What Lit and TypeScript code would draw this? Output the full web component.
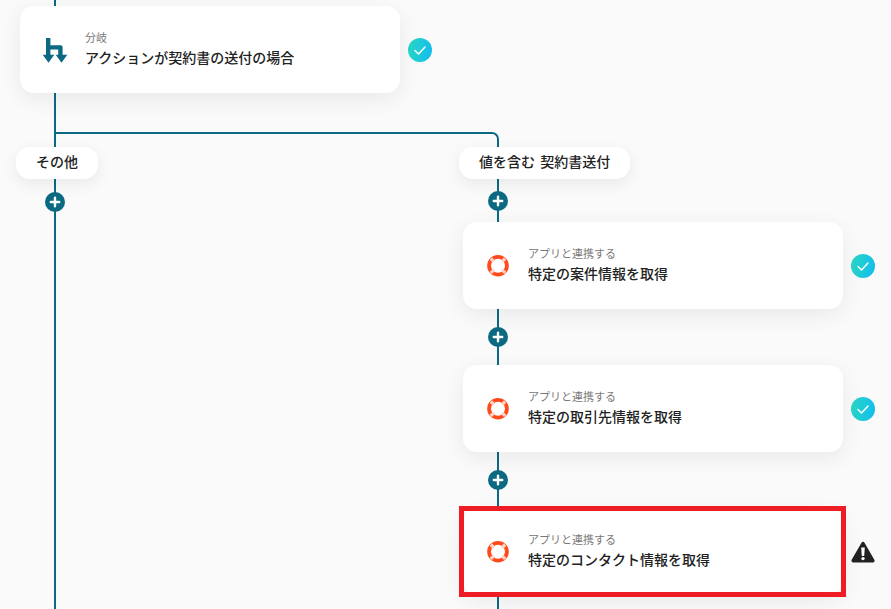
import { LitElement, html, css, svg } from "lit";
import { customElement } from "lit/decorators.js";

const branchIcon = html`<svg class="icon" viewBox="0 0 24 24" width="24" height="24" aria-hidden="true">
  <path d="M3 0h4.400v7.200h10.200a2 2 0 0 1 2 2V18h-4.400v-6.600H7.400V18H3z" fill="#0b6a82"/>
  <path d="M-.3 16.800h11.600L5.500 24.800zM12.700 16.800h11.600L18.500 24.800z" fill="#0b6a82"/>
</svg>`;

const ringIcon = html`<svg class="icon" viewBox="0 0 24 24" width="24" height="24" aria-hidden="true">
  <circle cx="12" cy="11.700" r="8.900" fill="none" stroke="#ff4a1c" stroke-width="3.800"/>
  <g stroke="#ffd2c6" stroke-width="3.200">
    <path d="M4.800 4.500 7.900 7.600M19.200 4.500 16.100 7.600M19.200 18.900 16.100 15.800M4.800 18.900 7.900 15.800"/>
  </g>
</svg>`;

const checkBadge = html`<span class="check"><svg viewBox="0 0 24 24" width="24" height="24" aria-hidden="true">
  <path d="M7 12.500l3.500 3.500 6.500-7" fill="none" stroke="#fff" stroke-width="1.500" stroke-linecap="round" stroke-linejoin="round"/>
</svg></span>`;

const warnBadge = html`<svg class="warn" viewBox="0 0 24 24" width="24" height="24" aria-hidden="true">
  <path d="M12 3.500 21.800 20.700H2.200Z" fill="#222" stroke="#222" stroke-width="3.500" stroke-linejoin="round"/>
  <path d="M10.200 7.500h3.600l-.6 8.500h-2.400z" fill="#fff"/>
  <circle cx="12" cy="18.600" r="1.700" fill="#fff"/>
</svg>`;

const wires = svg`
  <path d="M55 0V609" />
  <path d="M55 133H492a6 6 0 0 1 6 6V609" />
`;

@customElement("app-root")
export class AppRoot extends LitElement {
  static styles = css`
    :host {
      display: block;
      width: 891px;
      height: 609px;
      font-family: "Noto Sans CJK JP", "Noto Sans", sans-serif;
      color: #222;
    }
    .canvas {
      position: relative;
      height: 609px;
      overflow: hidden;
      background: #fafafa;
    }
    .wires {
      position: absolute;
      inset: 0;
      fill: none;
      stroke: #0b6a82;
      stroke-width: 2;
    }
    .content {
      position: relative;
      padding-top: 6px;
    }
    .step {
      display: flex;
      align-items: center;
      gap: 8px;
    }
    .step.top {
      margin-left: 20px;
    }
    .card {
      position: relative;
      box-sizing: border-box;
      width: 380px;
      height: 87px;
      display: flex;
      align-items: center;
      gap: 18px;
      padding-left: 23px;
      background: #fff;
      border-radius: 14px;
      box-shadow: 0 6px 22px rgba(0, 0, 0, 0.07);
    }
    .icon {
      flex: none;
      display: block;
      overflow: visible;
    }
    .texts {
      display: flex;
      flex-direction: column;
      padding-bottom: 4px;
    }
    .sub {
      font-size: 11px;
      line-height: 18px;
      color: #777;
    }
    .title {
      font-size: 14px;
      line-height: 22px;
      font-weight: 500;
      color: #222;
    }
    .check {
      display: block;
      width: 24px;
      height: 24px;
      border-radius: 50%;
      background: linear-gradient(100deg, #2bd8c2, #10bcef);
    }
    .check svg,
    .warn {
      display: block;
      flex: none;
    }
    .branches {
      display: grid;
      grid-template-columns: 459px 1fr;
      margin-top: 54px;
    }
    .other {
      padding-left: 16px;
    }
    .pill {
      display: inline-block;
      height: 32px;
      padding: 0 20px;
      border-radius: 14px;
      background: #fff;
      font-size: 14px;
      line-height: 29px;
      font-weight: 500;
      word-spacing: 2px;
      color: #222;
      box-shadow: 0 5px 16px rgba(0, 0, 0, 0.07);
      vertical-align: top;
    }
    .pillrow {
      display: flex;
      height: 32px;
    }
    .plus {
      display: block;
      width: 20px;
      height: 20px;
      border-radius: 50%;
      background: #0b6a82;
    }
    .plus svg {
      display: block;
    }
    .other .plus {
      margin: 13px 0 0 29px;
    }
    .sent > .plus.first {
      margin: 12px 0 11px 29px;
    }
    .sent > .plus {
      margin: 18px 0 18px 29px;
    }
    .sent > .step {
      margin-left: 4px;
    }
    .flagged::after {
      content: "";
      position: absolute;
      left: -4px;
      right: -3px;
      top: -2px;
      bottom: -2px;
      border: 5px solid #ee1c25;
      pointer-events: none;
    }
  `;

  private plus(first = false) {
    return html`<span class="plus ${first ? "first" : ""}"><svg viewBox="0 0 20 20" width="20" height="20" aria-hidden="true">
      <path d="M10 5.800v8.400M5.800 10h8.400" stroke="#fff" stroke-width="2.400" stroke-linecap="round"/>
    </svg></span>`;
  }

  private step(title: string, badge: unknown, flagged = false) {
    return html`<div class="step">
      <div class="card ${flagged ? "flagged" : ""}">
        ${ringIcon}
        <div class="texts">
          <span class="sub">アプリと連携する</span>
          <span class="title">${title}</span>
        </div>
      </div>
      ${badge}
    </div>`;
  }

  render() {
    return html`<div class="canvas">
      <svg class="wires" width="891" height="609" viewBox="0 0 891 609" aria-hidden="true">${wires}</svg>
      <div class="content">
        <div class="step top">
          <div class="card">
            ${branchIcon}
            <div class="texts">
              <span class="sub">分岐</span>
              <span class="title">アクションが契約書の送付の場合</span>
            </div>
          </div>
          ${checkBadge}
        </div>
        <div class="branches">
          <div class="other">
            <div class="pillrow"><span class="pill">その他</span></div>
            ${this.plus()}
          </div>
          <div class="sent">
            <div class="pillrow"><span class="pill">値を含む 契約書送付</span></div>
            ${this.plus(true)}
            ${this.step("特定の案件情報を取得", checkBadge)}
            ${this.plus()}
            ${this.step("特定の取引先情報を取得", checkBadge)}
            ${this.plus()}
            ${this.step("特定のコンタクト情報を取得", warnBadge, true)}
          </div>
        </div>
      </div>
    </div>`;
  }
}
